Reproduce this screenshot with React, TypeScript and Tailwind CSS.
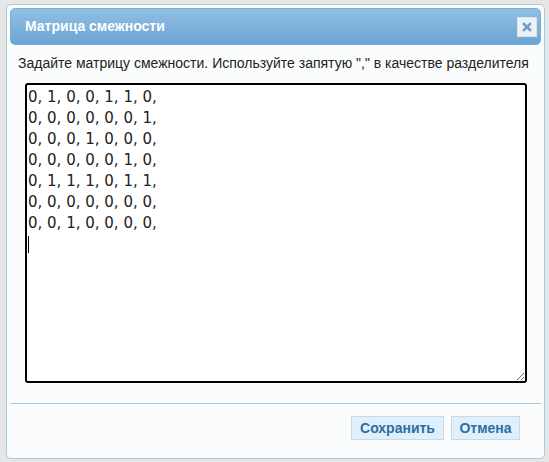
import React from 'react';

const matrix = [
  '0, 1, 0, 0, 1, 1, 0,',
  '0, 0, 0, 0, 0, 0, 1,',
  '0, 0, 0, 1, 0, 0, 0,',
  '0, 0, 0, 0, 0, 1, 0,',
  '0, 1, 1, 1, 0, 1, 1,',
  '0, 0, 0, 0, 0, 0, 0,',
  '0, 0, 1, 0, 0, 0, 0,',
].join('\n') + '\n';

const DialogButton = ({ label, width }: { label: string; width: string }) => (
  <button className={`${width} h-[24px] border border-[#c5dbec] bg-[#dfeffc] text-[#2e6e9e] text-[14px] font-bold leading-none [font-family:'Liberation_Sans',Arial,sans-serif]`}>
    {label}
  </button>
);

export default function App() {
  return (
    <div className="w-[549px] h-[462px] bg-[#e6e6e6] pt-[4px] pl-[6px] overflow-hidden">
      <div className="w-[539px] h-[455px] border border-[#a6c9e2] rounded-[5px] bg-[#fbfdfd] p-[3px] flex flex-col">
        {/* Title bar */}
        <div className="h-[37px] shrink-0 rounded-[5px] border border-[#79aedb] bg-gradient-to-b from-[#92bfe3] to-[#6aa4d4] flex items-center justify-between pl-[14px] pr-[3px]">
          <span className="text-white text-[14px] font-bold [font-family:'Liberation_Sans',Arial,sans-serif]">
            Матрица смежности
          </span>
          <button className="w-[20px] h-[20px] bg-[#eef2f5] border border-[#dbe3ea] flex items-center justify-center">
            <svg width="10" height="10" viewBox="0 0 10 10">
              <path d="M2 2 L8 8 M8 2 L2 8" stroke="#6d9fcf" strokeWidth="2.6" strokeLinecap="square" />
            </svg>
          </button>
        </div>

        {/* Content */}
        <div className="flex-1 flex flex-col px-[15px]">
          <p className="mt-[9px] -ml-[7px] whitespace-nowrap text-[14px] text-[#222] leading-[19px] [font-family:'Liberation_Sans',Arial,sans-serif]">
            Задайте матрицу смежности. Используйте запятую "," в качестве разделителя
          </p>
          <div className="relative mt-[10px]">
            <textarea
              defaultValue={matrix}
              spellCheck={false}
              className="block w-[502px] h-[300px] border-2 border-black rounded-[3px] bg-white px-[1px] pt-[2px] text-[15px] leading-[21px] text-[#222] resize-y outline-none [font-family:'DejaVu_Sans',sans-serif]"
            />
            <span className="absolute left-[3px] top-[153px] w-[1px] h-[17px] bg-black" />
          </div>
        </div>

        {/* Footer */}
        <div className="h-[52px] shrink-0 border-t border-[#a6c9e2] flex items-start justify-end gap-[7px] pt-[12px] pr-[21px]">
          <DialogButton label="Сохранить" width="w-[93px]" />
          <DialogButton label="Отмена" width="w-[69px]" />
        </div>
      </div>
    </div>
  );
}
